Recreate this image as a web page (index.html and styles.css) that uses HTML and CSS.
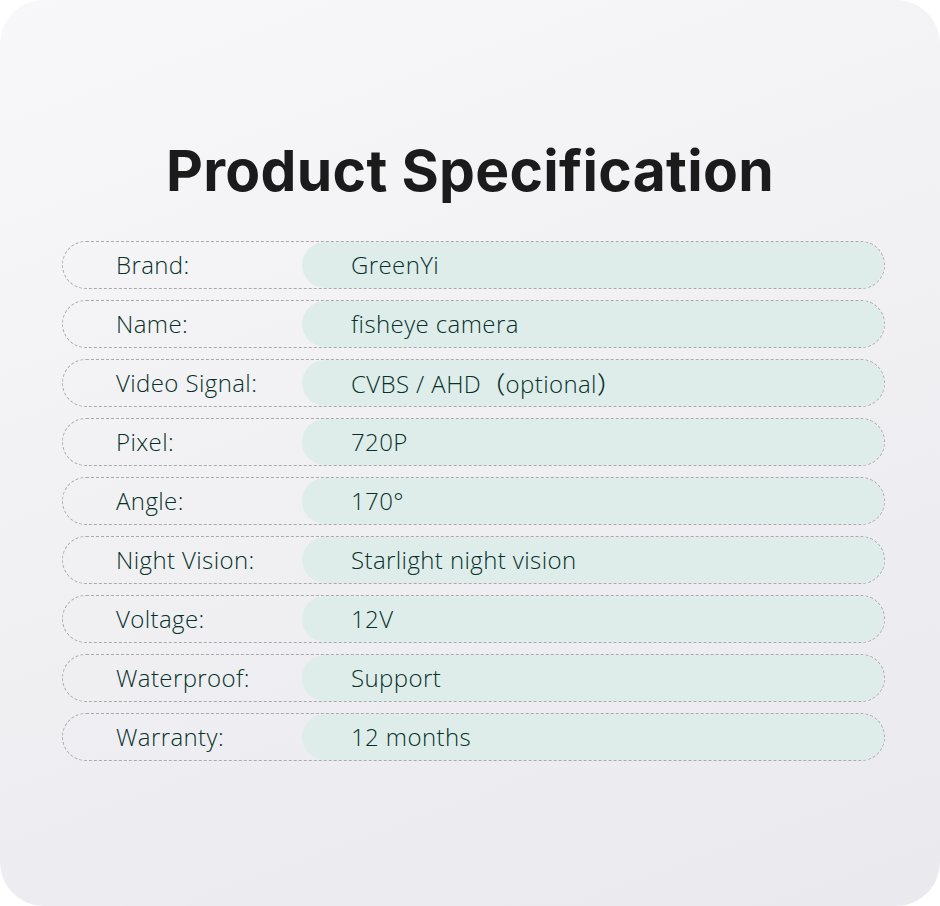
FILE: index.html
```html
<!DOCTYPE html>
<html lang="en">
<head>
<meta charset="utf-8">
<title>Product Specification</title>
<link rel="stylesheet" href="styles.css">
</head>
<body>
<main class="card">
  <h1 class="title">Product Specification</h1>
  <div class="specs">
    <div class="row"><span class="label">Brand:</span><span class="value">GreenYi</span></div>
    <div class="row"><span class="label">Name:</span><span class="value">fisheye camera</span></div>
    <div class="row"><span class="label">Video Signal:</span><span class="value">CVBS / AHD（optional）</span></div>
    <div class="row"><span class="label">Pixel:</span><span class="value">720P</span></div>
    <div class="row"><span class="label">Angle:</span><span class="value">170°</span></div>
    <div class="row"><span class="label">Night Vision:</span><span class="value">Starlight night vision</span></div>
    <div class="row"><span class="label">Voltage:</span><span class="value">12V</span></div>
    <div class="row"><span class="label">Waterproof:</span><span class="value">Support</span></div>
    <div class="row"><span class="label">Warranty:</span><span class="value">12 months</span></div>
  </div>
</main>
</body>
</html>
```

FILE: styles.css
```css
html, body {
  margin: 0;
  padding: 0;
  background: #ffffff;
}
.card {
  width: 940px;
  height: 906px;
  box-sizing: border-box;
  border-radius: 44px;
  background: linear-gradient(160deg, #f8f8fa 0%, #f1f1f4 45%, #e9e9ee 100%);
  padding-top: 132px;
  overflow: hidden;
}
.title {
  margin: 0;
  text-align: center;
  font-family: "Inter", "Liberation Sans", sans-serif;
  font-weight: 700;
  font-size: 57px;
  line-height: 78px;
  letter-spacing: 0.3px;
  color: #1b1b1b;
}
.specs {
  margin: 31px 55px 0 62px;
  display: flex;
  flex-direction: column;
  gap: 11px;
}
.row {
  display: flex;
  align-items: stretch;
  height: 48px;
  box-sizing: border-box;
  border: 1px dashed #a9a9ae;
  border-radius: 24px;
  font-family: "Open Sans", "Noto Sans CJK SC", sans-serif;
  font-weight: 350;
  font-size: 24px;
  letter-spacing: 0.4px;
  color: #07322a;
}
.label {
  width: 239px;
  padding: 0 0 2px 53px;
  box-sizing: border-box;
  display: flex;
  align-items: center;
}
.value {
  flex: 1;
  border-radius: 23px;
  background: #deedea;
  padding: 0 0 2px 49px;
  display: flex;
  align-items: center;
}
```
